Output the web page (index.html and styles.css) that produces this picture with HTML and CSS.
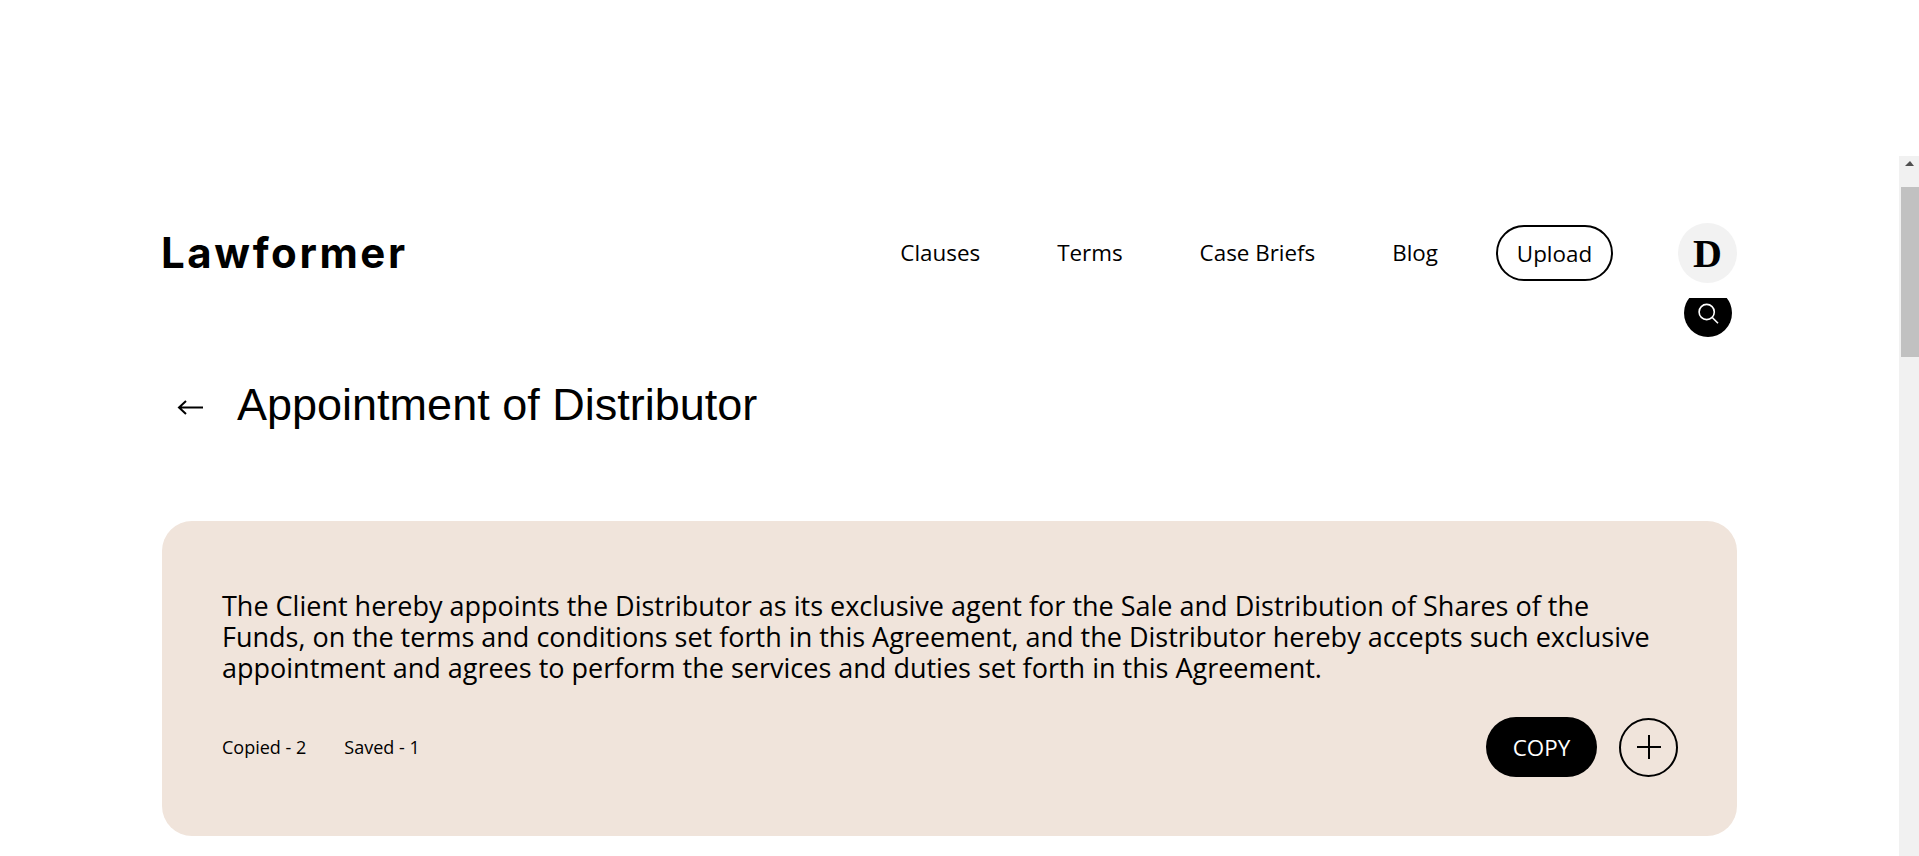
FILE: index.html
```html
<!DOCTYPE html>
<html lang="en">
<head>
  <meta charset="UTF-8" />
  <meta name="viewport" content="width=device-width, initial-scale=1.0"/>
  <title>Appointment of Distributor</title>
  <link rel="stylesheet" href="styles.css">
</head>
<body>
  <div class="page">
    <header class="header">
      <div class="logo">Lawformer</div>
      <nav class="nav">
        <a class="nav-link">Clauses</a>
        <a class="nav-link">Terms</a>
        <a class="nav-link">Case Briefs</a>
        <a class="nav-link">Blog</a>
        <a class="upload-btn">Upload</a>
        <div class="avatar">D</div>
      </nav>
    </header>

    <div class="search-row">
      <div class="search-btn">
        <svg width="24" height="24" viewBox="0 0 24 24" fill="none" stroke="#fff" stroke-width="1.6">
          <circle cx="10.700" cy="11" r="7.600"/>
          <path d="M16.300 16.500l5.700 5.700"/>
        </svg>
      </div>
    </div>

    <div class="title-row">
      <svg class="back-arrow" width="28" height="20" viewBox="0 0 28 20" fill="none" stroke="#000" stroke-width="2">
        <path d="M27 10.500H3M10 4l-7 6.500 7 6.500"/>
      </svg>
      <h1 class="title">Appointment of Distributor</h1>
    </div>

    <section class="card">
      <p class="clause">The Client hereby appoints the Distributor as its exclusive agent for the Sale and Distribution of Shares of the Funds, on the terms and conditions set forth in this Agreement, and the Distributor hereby accepts such exclusive appointment and agrees to perform the services and duties set forth in this Agreement.</p>
      <div class="card-footer">
        <div class="stats">
          <span>Copied - 2</span>
          <span>Saved - 1</span>
        </div>
        <div class="actions">
          <button class="copy-btn">COPY</button>
          <button class="add-btn">
            <svg width="28" height="28" viewBox="0 0 28 28" fill="none" stroke="#000" stroke-width="2">
              <path d="M14 2v24M2 14h24"/>
            </svg>
          </button>
        </div>
      </div>
    </section>
  </div>

  <div class="scrollbar">
    <div class="scroll-up"></div>
    <div class="scroll-thumb"></div>
  </div>
</body>
</html>
```

FILE: styles.css
```css
html, body {
  margin: 0;
  height: 856px;
  overflow: hidden;
  background: #fff;
  color: #000;
  font-family: "Open Sans", sans-serif;
}

.page {
  width: 1575px;
  margin-left: 162px;
  padding-top: 223px;
}

.header {
  display: flex;
  justify-content: space-between;
  align-items: center;
  height: 60px;
  margin-bottom: 15px;
}

.logo {
  font-family: "Inter", sans-serif;
  font-weight: 700;
  font-size: 42px;
  letter-spacing: 2.6px;
  margin-top: -2px;
  margin-left: -1px;
}

.nav {
  display: flex;
  align-items: center;
  font-size: 22.4px;
}

.nav-link {
  margin-right: 77px;
  margin-top: -1px;
}

.upload-btn {
  width: 117px;
  height: 56px;
  box-sizing: border-box;
  border: 2px solid #000;
  border-radius: 28px;
  display: flex;
  justify-content: center;
  align-items: center;
  margin-left: -19px;
  margin-right: 65px;
}

.avatar {
  width: 59px;
  height: 60px;
  border-radius: 50%;
  background: #f2f2f2;
  display: flex;
  justify-content: center;
  align-items: center;
  font-family: "Liberation Serif", serif;
  font-weight: bold;
  font-size: 40px;
}

.search-row {
  display: flex;
  justify-content: flex-end;
  height: 40px;
  padding-right: 5px;
  overflow: hidden;
}

.search-btn {
  width: 48px;
  height: 48px;
  margin-top: -9px;
  border-radius: 50%;
  background: #000;
  display: flex;
  justify-content: center;
  align-items: center;
}

.title-row {
  display: flex;
  align-items: center;
  margin-top: 37px;
  height: 60px;
}

.back-arrow {
  margin-left: 14px;
  margin-top: 3px;
  margin-right: 33px;
}

.title {
  margin: 0;
  font-family: "Liberation Sans", sans-serif;
  font-weight: normal;
  font-size: 45px;
}

.card {
  box-sizing: border-box;
  height: 315px;
  margin-top: 86px;
  padding: 69px 59px 0 60px;
  background: #f0e4db;
  border-radius: 30px;
}

.clause {
  margin: 0;
  font-size: 27px;
  line-height: 31px;
}

.card-footer {
  display: flex;
  justify-content: space-between;
  align-items: center;
  margin-top: 34px;
}

.stats {
  display: flex;
  gap: 38px;
  font-size: 18px;
}

.actions {
  display: flex;
  align-items: center;
  gap: 22px;
}

.copy-btn {
  width: 111px;
  height: 60px;
  border: none;
  border-radius: 30px;
  background: #000;
  color: #fff;
  font-family: "Open Sans", sans-serif;
  font-size: 22.4px;
}

.add-btn {
  width: 59px;
  height: 59px;
  padding: 0;
  border: 2px solid #000;
  border-radius: 50%;
  background: none;
  display: flex;
  justify-content: center;
  align-items: center;
}

.scrollbar {
  position: absolute;
  top: 156px;
  right: 0;
  bottom: 0;
  width: 20px;
  background: #f1f1f1;
}

.scroll-up {
  height: 31px;
  position: relative;
}

.scroll-up::after {
  content: "";
  position: absolute;
  left: 6px;
  top: 5px;
  border-left: 5px solid transparent;
  border-right: 4px solid transparent;
  border-bottom: 5px solid #505050;
}

.scroll-thumb {
  height: 170px;
  margin-left: 2px;
  background: #c1c1c1;
}
```
